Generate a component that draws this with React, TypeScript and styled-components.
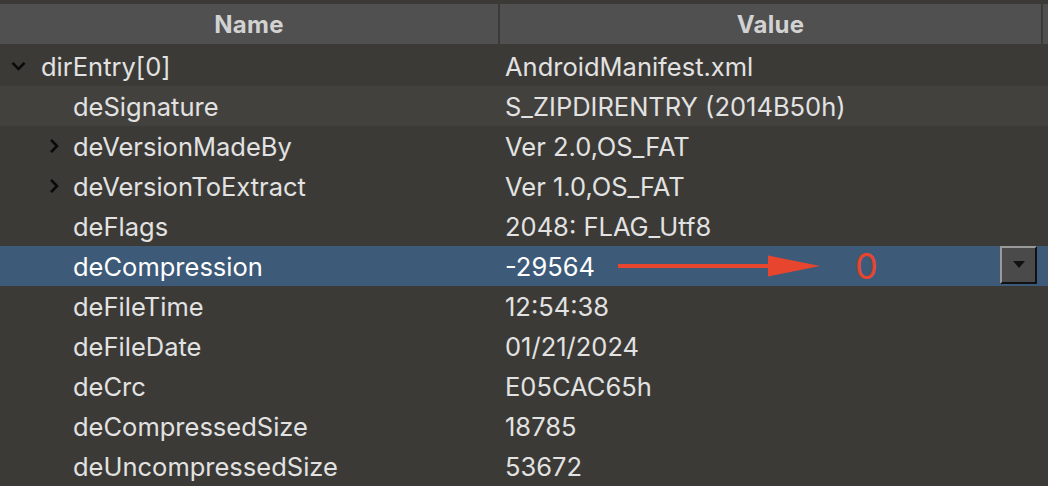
import React from "react";
import styled, { createGlobalStyle } from "styled-components";

const Global = createGlobalStyle`
  html, body { margin: 0; padding: 0; background: #3b3a36; }
  body { font-family: Inter, "Noto Sans", sans-serif; }
`;

const Frame = styled.div`
  width: 1048px;
  height: 486px;
  overflow: hidden;
  background: #3b3a36;
  padding-top: 4px;
  box-sizing: border-box;
`;

const Header = styled.div`
  display: grid;
  grid-template-columns: 498px 2px 541px 2px 1fr;
  height: 40px;
  background: #505050;
  margin-bottom: 2px;
`;

const HeaderCell = styled.div`
  display: flex;
  align-items: center;
  justify-content: center;
  color: #d2d2d2;
  font-weight: 700;
  font-size: 24px;
  letter-spacing: 0.3px;
`;

const Sep = styled.div`
  background: #3b3a36;
`;

const Row = styled.div<{ $selected?: boolean; $hover?: boolean }>`
  display: grid;
  grid-template-columns: 505px 1fr;
  height: 40px;
  align-items: center;
  background: ${(p) => (p.$selected ? "#3d5a78" : p.$hover ? "#42413e" : "#3b3a36")};
  color: ${(p) => (p.$selected ? "#ffffff" : "#e2e2e2")};
  font-size: 25.5px;
  position: relative;
`;

const NameCell = styled.div<{ $depth: number }>`
  display: flex;
  align-items: center;
  padding-left: ${(p) => (p.$depth === 0 ? 11 : 49)}px;
  white-space: nowrap;
`;

const Toggle = styled.span<{ $depth: number }>`
  width: ${(p) => (p.$depth === 0 ? 30 : 24)}px;
  display: inline-flex;
  align-items: center;
  justify-content: flex-start;
`;

const ValueCell = styled.div`
  display: flex;
  align-items: center;
  white-space: nowrap;
`;

const Arrow = styled.svg`
  margin-left: 23px;
  flex: none;
`;

const Zero = styled.span`
  color: #e8452f;
  font-size: 36px;
  line-height: 1;
  margin-left: 35px;
`;

const Dropdown = styled.div`
  position: absolute;
  left: 1000px;
  top: 0;
  width: 37px;
  height: 38px;
  box-sizing: border-box;
  background: #4a4a4a;
  border-top: 2px solid #9a9a9a;
  border-left: 2px solid #9a9a9a;
  border-right: 2px solid #111;
  border-bottom: 2px solid #111;
  display: flex;
  align-items: center;
  justify-content: center;
`;

const Chevron = ({ open }: { open: boolean }) =>
  open ? (
    <svg width="15" height="10" viewBox="0 0 15 10">
      <path d="M1.5 1.8 L7.5 7.8 L13.5 1.8" fill="none" stroke="#0a0a0a" strokeWidth="2.6" />
    </svg>
  ) : (
    <svg width="10" height="16" viewBox="0 0 10 16">
      <path d="M2 1.8 L8 8 L2 14.2" fill="none" stroke="#0a0a0a" strokeWidth="2.6" />
    </svg>
  );

type Item = { name: string; value: string; depth: number; toggle?: "open" | "closed"; hover?: boolean; selected?: boolean };

const items: Item[] = [
  { name: "dirEntry[0]", value: "AndroidManifest.xml", depth: 0, toggle: "open" },
  { name: "deSignature", value: "S_ZIPDIRENTRY (2014B50h)", depth: 1, hover: true },
  { name: "deVersionMadeBy", value: "Ver 2.0,OS_FAT", depth: 1, toggle: "closed" },
  { name: "deVersionToExtract", value: "Ver 1.0,OS_FAT", depth: 1, toggle: "closed" },
  { name: "deFlags", value: "2048: FLAG_Utf8", depth: 1 },
  { name: "deCompression", value: "-29564", depth: 1, selected: true },
  { name: "deFileTime", value: "12:54:38", depth: 1 },
  { name: "deFileDate", value: "01/21/2024", depth: 1 },
  { name: "deCrc", value: "E05CAC65h", depth: 1 },
  { name: "deCompressedSize", value: "18785", depth: 1 },
  { name: "deUncompressedSize", value: "53672", depth: 1 },
];

export default function App() {
  return (
    <Frame>
      <Global />
      <Header>
        <HeaderCell>Name</HeaderCell>
        <Sep />
        <HeaderCell>Value</HeaderCell>
        <Sep />
        <div />
      </Header>
      {items.map((it) => (
        <Row key={it.name} $selected={it.selected} $hover={it.hover}>
          <NameCell $depth={it.depth}>
            <Toggle $depth={it.depth}>{it.toggle ? <Chevron open={it.toggle === "open"} /> : null}</Toggle>
            {it.name}
          </NameCell>
          <ValueCell>
            {it.value}
            {it.selected && (
              <>
                <Arrow width="202" height="24" viewBox="0 0 202 24">
                  <rect x="0" y="10" width="160" height="4" fill="#e8452f" />
                  <polygon points="150,1.5 202,12 150,22.5" fill="#e8452f" />
                </Arrow>
                <Zero>0</Zero>
              </>
            )}
          </ValueCell>
          {it.selected && (
            <Dropdown>
              <svg width="12" height="8" viewBox="0 0 12 8">
                <polygon points="0,0 12,0 6,7" fill="#111" />
              </svg>
            </Dropdown>
          )}
        </Row>
      ))}
    </Frame>
  );
}
